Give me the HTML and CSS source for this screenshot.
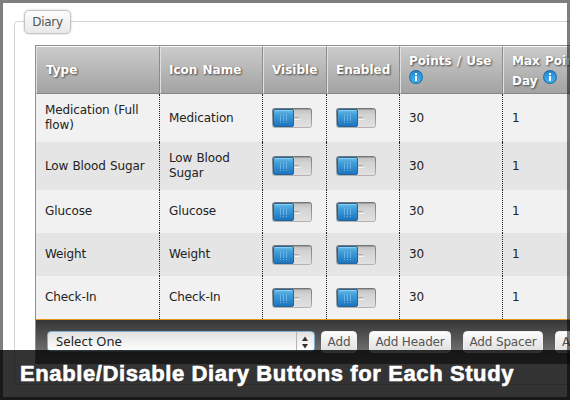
FILE: index.html
```
<!DOCTYPE html>
<html lang="en">
<head>
    <meta charset="UTF-8">
    <title>Diary</title>
    <link rel="stylesheet" href="styles.css">
</head>
<body>
    <svg class="defs" width="0" height="0">
        <defs>
            <linearGradient id="blue" x1="0" y1="0" x2="0" y2="1">
                <stop offset="0" stop-color="#6dbfe9"/>
                <stop offset="0.3" stop-color="#429fd9"/>
                <stop offset="1" stop-color="#1b72bd"/>
            </linearGradient>
            <linearGradient id="info-blue" x1="0" y1="0" x2="0" y2="1">
                <stop offset="0" stop-color="#2388cf"/>
                <stop offset="1" stop-color="#42b6f4"/>
            </linearGradient>
            <linearGradient id="track" x1="0" y1="0" x2="0" y2="1">
                <stop offset="0" stop-color="#bdbdbd"/>
                <stop offset="0.3" stop-color="#d2d2d2"/>
                <stop offset="1" stop-color="#e2e2e2"/>
            </linearGradient>
            <linearGradient id="edge" x1="0" y1="0" x2="0" y2="1">
                <stop offset="0" stop-color="#767676"/>
                <stop offset="1" stop-color="#b2b2b2"/>
            </linearGradient>
            <symbol id="switch" viewBox="0 0 40 20">
                <rect x="0.5" y="0.5" width="39" height="19" rx="2" fill="url(#track)" stroke="url(#edge)"/>
                <path d="M2 1.5h36" stroke="#a0a0a0"/>
                <path d="M22 9.5h5" stroke="#aaa"/>
                <path d="M23 11.5h5" stroke="#f3f3f3"/>
                <rect x="1.5" y="1.5" width="20" height="17" rx="1.5" fill="url(#blue)" stroke="#23659b"/>
                <path d="M3 2.5h17" stroke="#8ccbeb"/>
                <path d="M8.500 6v9M11.500 6v9M14.500 6v9" stroke="#75bce9" stroke-opacity="0.8" stroke-dasharray="7 1 1"/>
            </symbol>
            <symbol id="info" viewBox="0 0 14 14">
                <circle cx="7" cy="7" r="6.400" fill="url(#info-blue)" stroke="#1f70ad" stroke-width="1.100"/>
                <path d="M6 3h2v2H6zM6 6h2v5H6z" fill="#fff"/>
            </symbol>
        </defs>
    </svg>

    <div class="page">
        <div class="fieldset">
            <div class="legend">Diary</div>
            <div class="table-wrap">
                <table>
                    <colgroup>
                        <col class="col-type"><col class="col-icon"><col class="col-visible">
                        <col class="col-enabled"><col class="col-points"><col class="col-max">
                    </colgroup>
                    <thead>
                        <tr>
                            <th>Type</th>
                            <th>Icon Name</th>
                            <th>Visible</th>
                            <th>Enabled</th>
                            <th class="double">Points / Use <svg class="info"><use href="#info"/></svg></th>
                            <th class="double">Max Points /<br>Day <svg class="info"><use href="#info"/></svg></th>
                        </tr>
                    </thead>
                    <tbody>
                        <tr class="tall">
                            <td>Medication (Full flow)</td>
                            <td>Medication</td>
                            <td><svg class="switch"><use href="#switch"/></svg></td>
                            <td><svg class="switch"><use href="#switch"/></svg></td>
                            <td>30</td>
                            <td>1</td>
                        </tr>
                        <tr class="tall">
                            <td>Low Blood Sugar</td>
                            <td>Low Blood Sugar</td>
                            <td><svg class="switch"><use href="#switch"/></svg></td>
                            <td><svg class="switch"><use href="#switch"/></svg></td>
                            <td>30</td>
                            <td>1</td>
                        </tr>
                        <tr>
                            <td>Glucose</td>
                            <td>Glucose</td>
                            <td><svg class="switch"><use href="#switch"/></svg></td>
                            <td><svg class="switch"><use href="#switch"/></svg></td>
                            <td>30</td>
                            <td>1</td>
                        </tr>
                        <tr>
                            <td>Weight</td>
                            <td>Weight</td>
                            <td><svg class="switch"><use href="#switch"/></svg></td>
                            <td><svg class="switch"><use href="#switch"/></svg></td>
                            <td>30</td>
                            <td>1</td>
                        </tr>
                        <tr>
                            <td>Check-In</td>
                            <td>Check-In</td>
                            <td><svg class="switch"><use href="#switch"/></svg></td>
                            <td><svg class="switch"><use href="#switch"/></svg></td>
                            <td>30</td>
                            <td>1</td>
                        </tr>
                    </tbody>
                </table>
                <div class="toolbar">
                    <div class="select">
                        <span>Select One</span>
                        <svg class="arrows" width="18" height="21" viewBox="0 0 18 21">
                            <path d="M0.500 0v21" stroke="#b5b5b5"/>
                            <path d="M6 9l3-4.500L12 9zM6 12l3 4.500L12 12z" fill="#333"/>
                        </svg>
                    </div>
                    <div class="button add">Add</div>
                    <div class="button header">Add Header</div>
                    <div class="button spacer">Add Spacer</div>
                    <div class="button more">A</div>
                </div>
            </div>
        </div>
    </div>

    <div class="caption">Enable/Disable Diary Buttons for Each Study</div>
    <div class="frame"></div>
</body>
</html>
```
FILE: styles.css
```
* {
    box-sizing: border-box;
}
body {
    margin: 0;
    width: 570px;
    height: 400px;
    overflow: hidden;
    position: relative;
    background: #fff;
    font-family: "DejaVu Sans", Verdana, sans-serif;
    font-size: 12px;
    line-height: 15px;
    color: #222;
}
.defs {
    position: absolute;
}
.page {
    padding: 21px 0 0 14px;
    height: 400px;
    overflow: hidden;
}
.fieldset {
    width: 640px;
    height: 364px;
    border: 1px solid #d4d4d4;
    border-radius: 4px;
    padding-left: 20px;
}
.legend {
    width: 47px;
    height: 24px;
    margin: -12px 0 11px -11px;
    border: 1px solid #c4c4c4;
    border-radius: 5px;
    background: linear-gradient(#fdfdfd, #e8e8e8);
    box-shadow: 0 0 2px rgba(0, 0, 0, 0.25);
    color: #555;
    letter-spacing: -0.3px;
    line-height: 22px;
    text-align: center;
}
.table-wrap {
    border-left: 1px solid #909090;
    border-top: 1px solid #909090;
}
table {
    width: 577px;
    table-layout: fixed;
    border-collapse: separate;
    border-spacing: 0;
}
.col-type { width: 124px; }
.col-icon { width: 103px; }
.col-visible { width: 64px; }
.col-enabled { width: 73px; }
.col-points { width: 103px; }
.col-max { width: 110px; }
th {
    height: 48px;
    padding: 0 0 0 8px;
    border-top: 1px solid #f8f8f8;
    border-left: 1px solid #e0e0e0;
    border-right: 1px solid #8c8c8c;
    border-bottom: 1px solid #858585;
    background: linear-gradient(#cbcbcb, #a3a3a3);
    color: #fff;
    text-align: left;
    line-height: 18px;
    word-spacing: 1px;
    text-shadow: 1px 1px 2px #444;
}
th:first-child {
    padding-left: 9px;
}
th.double {
    padding-top: 2px;
}
td {
    height: 43px;
    padding: 0 5px 0 9px;
    border-right: 1px dotted #222;
    background: #f1f1f1;
    letter-spacing: -0.1px;
    word-spacing: 0.4px;
}
.tall td {
    height: 48px;
}
tr:nth-child(even) td {
    background: #e5e5e5;
}
.info {
    width: 14px;
    height: 14px;
    vertical-align: 1px;
}
.switch {
    display: block;
    width: 40px;
    height: 20px;
}
.toolbar {
    display: flex;
    width: 577px;
    height: 45px;
    padding: 11px 0 0 11px;
    border-top: 1px solid #e8951c;
    background: linear-gradient(#353535, #858585);
}
.select {
    display: flex;
    justify-content: space-between;
    width: 268px;
    height: 21px;
    margin-right: 6px;
    padding-left: 8px;
    border: 1px solid #7db0d2;
    border-radius: 4px;
    background: linear-gradient(#e2e2e2, #fff);
    font-family: "Noto Sans", sans-serif;
    font-size: 13px;
    letter-spacing: 0.1px;
    line-height: 18px;
}
.button {
    height: 22px;
    border: 1px solid #eee;
    border-radius: 4px;
    background: linear-gradient(#fcfcfc, #dedede);
    color: #555;
    letter-spacing: -0.15px;
    line-height: 20px;
    text-align: center;
}
.add {
    width: 36px;
    margin-right: 12px;
}
.header {
    width: 82px;
    margin-right: 12px;
}
.spacer {
    width: 80px;
    margin-right: 12px;
}
.more {
    width: 22px;
}
.caption {
    position: absolute;
    left: 0;
    top: 350px;
    width: 570px;
    height: 50px;
    padding-left: 20px;
    background: rgba(0, 0, 0, 0.8);
    color: #fff;
    font: bold 22px/48px "Liberation Sans", Arial, sans-serif;
    letter-spacing: 0.6px;
    -webkit-text-stroke: 0.6px #fff;
    white-space: nowrap;
}
.frame {
    position: absolute;
    inset: 0;
    border: 3px solid rgba(0, 0, 0, 0.5);
}
```
